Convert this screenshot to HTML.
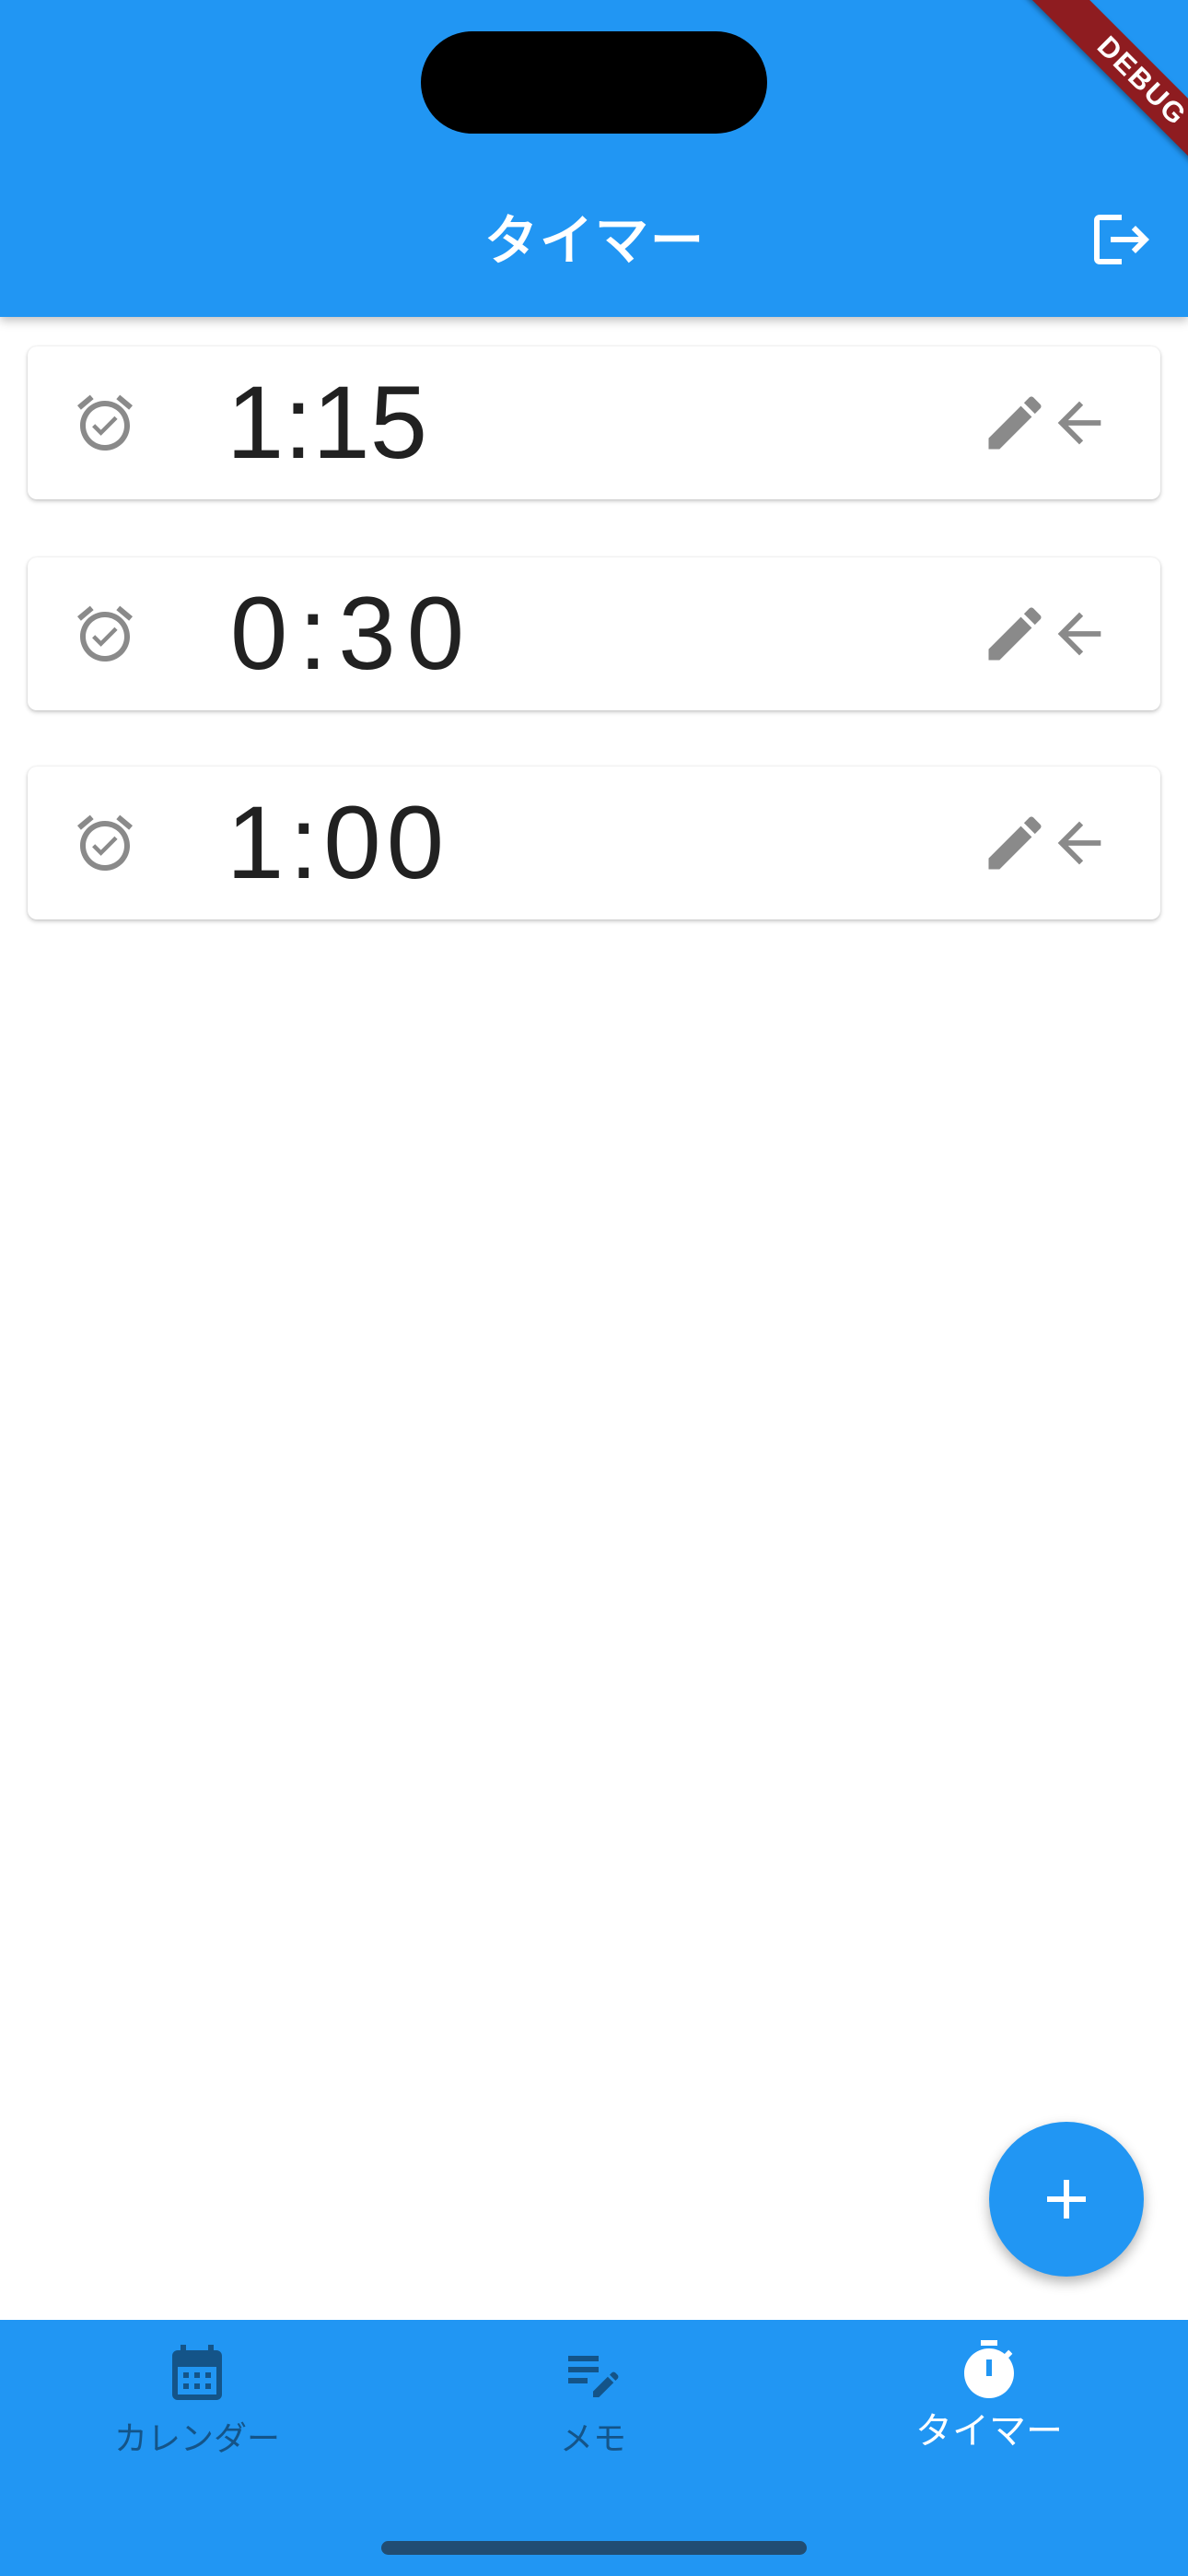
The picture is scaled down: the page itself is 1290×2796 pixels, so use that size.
<!DOCTYPE html>
<html><head><meta charset="utf-8"><style>
body{margin:0;width:1290px;height:2796px;position:relative;background:#fff;overflow:hidden;font-family:"Liberation Sans","Noto Sans CJK JP",sans-serif}
.hdr{position:absolute;left:0;top:0;width:1290px;height:344px;background:#2196F3;box-shadow:0 4px 10px rgba(0,0,0,.25);z-index:2;overflow:hidden}
.island{position:absolute;left:457px;top:34px;width:376px;height:111px;border-radius:56px;background:#000}
.title{position:absolute;left:0;width:1290px;top:224px;text-align:center;color:#fff;font-size:60px;line-height:76px;font-weight:500}
.card{position:absolute;left:30px;width:1230px;height:166px;background:#fff;border-radius:10px;box-shadow:0 2px 5px rgba(0,0,0,.22),0 0 2px rgba(0,0,0,.08)}
.card .t{position:absolute;left:216px;top:20px;font-size:112px;line-height:126px;color:#212121}
.card svg{position:absolute;fill:#8a8a8a}
.fab{position:absolute;left:1074px;top:2303px;width:168px;height:168px;border-radius:50%;background:#2196F3;box-shadow:0 6px 14px rgba(0,0,0,.3)}
.nav{position:absolute;left:0;top:2518px;width:1290px;height:278px;background:#2196F3}
.lab{position:absolute;width:400px;text-align:center;font-size:36px;line-height:44px}
</style></head><body>
<div class="hdr">
<div class="island"></div>
<div class="title">タイマー</div>
<svg style="position:absolute;left:1182px;top:224px" width="72" height="72" viewBox="0 0 24 24" fill="#fff"><path d="M17 7l-1.41 1.41L18.17 11H8v2h10.17l-2.58 2.58L17 17l5-5zM4 5h8V3H4c-1.1 0-2 .9-2 2v14c0 1.1.9 2 2 2h8v-2H4V5z"/></svg>
<div style="position:absolute;left:1070px;top:66px;width:340px;height:44px;background:#8e1c20;transform:rotate(45deg);transform-origin:center;box-shadow:0 3px 6px rgba(0,0,0,.35);color:#fff;font-weight:bold;font-size:31px;line-height:44px;text-align:center;letter-spacing:2px">DEBUG</div>
</div>

<div class="card" style="top:376px">
<svg style="left:48px;top:47px" width="72" height="72" viewBox="0 0 24 24"><path d="M10.54 14.53L8.41 12.4l-1.06 1.06 3.18 3.18 6-6-1.06-1.06zM22 5.72l-4.6-3.86-1.29 1.53 4.6 3.86zM7.88 3.39L6.6 1.86 2 5.71l1.29 1.53zM12 4c-4.97 0-9 4.03-9 9s4.02 9 9 9c4.97 0 9-4.03 9-9s-4.03-9-9-9zm0 16c-3.87 0-7-3.13-7-7s3.13-7 7-7 7 3.130 7 7-3.13 7-7 7z"/></svg>
<div class="t">1:15</div>
<svg style="left:1034px;top:45px" width="76" height="76" viewBox="0 0 24 24"><path d="M3 17.25V21h3.75L17.81 9.94l-3.75-3.75L3 17.25zM20.71 7.04c.39-.39.39-1.02 0-1.41l-2.34-2.34c-.39-.39-1.02-.39-1.41 0l-1.83 1.83 3.75 3.75 1.83-1.83z"/></svg>
<svg style="left:1107px;top:48px" width="70" height="70" viewBox="0 0 24 24"><path d="M20 11H7.83l5.59-5.59L12 4l-8 8 8 8 1.41-1.41L7.83 13H20v-2z"/></svg>
</div>
<div class="card" style="top:605px">
<svg style="left:48px;top:47px" width="72" height="72" viewBox="0 0 24 24"><path d="M10.54 14.53L8.41 12.4l-1.06 1.06 3.18 3.18 6-6-1.06-1.06zM22 5.72l-4.6-3.86-1.29 1.53 4.6 3.86zM7.88 3.39L6.6 1.86 2 5.71l1.29 1.53zM12 4c-4.97 0-9 4.03-9 9s4.02 9 9 9c4.97 0 9-4.03 9-9s-4.03-9-9-9zm0 16c-3.87 0-7-3.13-7-7s3.13-7 7-7 7 3.13 7 7-3.13 7-7 7z"/></svg>
<div class="t" style="left:220px;letter-spacing:12px">0:30</div>
<svg style="left:1034px;top:45px" width="76" height="76" viewBox="0 0 24 24"><path d="M3 17.25V21h3.75L17.81 9.94l-3.75-3.75L3 17.25zM20.71 7.04c.39-.39.39-1.02 0-1.41l-2.34-2.34c-.39-.39-1.02-.39-1.41 0l-1.83 1.83 3.75 3.75 1.83-1.83z"/></svg>
<svg style="left:1107px;top:48px" width="70" height="70" viewBox="0 0 24 24"><path d="M20 11H7.83l5.59-5.59L12 4l-8 8 8 8 1.41-1.41L7.83 13H20v-2z"/></svg>
</div>
<div class="card" style="top:832px">
<svg style="left:48px;top:47px" width="72" height="72" viewBox="0 0 24 24"><path d="M10.54 14.53L8.41 12.4l-1.06 1.06 3.18 3.18 6-6-1.06-1.06zM22 5.72l-4.6-3.86-1.29 1.53 4.6 3.86zM7.88 3.39L6.6 1.86 2 5.71l1.29 1.53zM12 4c-4.97 0-9 4.03-9 9s4.02 9 9 9c4.97 0 9-4.03 9-9s-4.03-9-9-9zm0 16c-3.87 0-7-3.13-7-7s3.13-7 7-7 7 3.13 7 7-3.13 7-7 7z"/></svg>
<div class="t" style="letter-spacing:6px">1:00</div>
<svg style="left:1034px;top:45px" width="76" height="76" viewBox="0 0 24 24"><path d="M3 17.25V21h3.75L17.81 9.94l-3.75-3.75L3 17.25zM20.71 7.04c.39-.39.39-1.02 0-1.41l-2.34-2.34c-.39-.39-1.02-.39-1.41 0l-1.83 1.83 3.75 3.75 1.83-1.83z"/></svg>
<svg style="left:1107px;top:48px" width="70" height="70" viewBox="0 0 24 24"><path d="M20 11H7.83l5.59-5.59L12 4l-8 8 8 8 1.41-1.41L7.83 13H20v-2z"/></svg>
</div>

<div class="fab"><svg style="position:absolute;left:48px;top:48px" width="72" height="72" viewBox="0 0 24 24" fill="#fff"><path d="M19 13h-6v6h-2v-6H5v-2h6V5h2v6h6v2z"/></svg></div>

<div class="nav">
<svg style="position:absolute;left:178px;top:21px" width="72" height="72" viewBox="0 0 24 24" fill="#145488"><path d="M19 4h-1V2h-2v2H8V2H6v2H5c-1.11 0-1.99.9-1.99 2L3 20a2 2 0 002 2h14c1.1 0 2-.9 2-2V6c0-1.1-.9-2-2-2zm0 16H5V10h14v10zM9 14H7v-2h2v2zm4 0h-2v-2h2v2zm4 0h-2v-2h2v2zm-8 4H7v-2h2v2zm4 0h-2v-2h2v2zm4 0h-2v-2h2v2z"/></svg>
<div class="lab" style="left:14px;top:107px;color:#145488">カレンダー</div>
<svg style="position:absolute;left:608px;top:21px" width="72" height="72" viewBox="0 0 24 24" fill="#145488"><path d="M3 10h11v2H3zm0-2h11V6H3zm0 8h7v-2H3zm15.01-3.13l.71-.71c.39-.39 1.02-.39 1.41 0l.71.71c.39.39.39 1.02 0 1.41l-.71.71-2.12-2.12zm-.71.71l-5.3 5.3V21h2.12l5.3-5.3-2.12-2.12z"/></svg>
<div class="lab" style="left:444px;top:107px;color:#145488">メモ</div>
<svg style="position:absolute;left:1038px;top:19px" width="72" height="72" viewBox="0 0 24 24" fill="#fff"><path d="M9 1h6v2H9zm10.03 6.39l1.42-1.42c-.43-.51-.9-.99-1.41-1.41l-1.42 1.42C16.07 4.74 14.12 4 12 4c-4.97 0-9 4.03-9 9s4.02 9 9 9 9-4.03 9-9c0-2.12-.74-4.07-1.970-5.61zM13 14h-2V8h2v6z"/></svg>
<div class="lab" style="left:874px;top:99px;color:#fff;font-size:40px">タイマー</div>
<div style="position:absolute;left:414px;top:240px;width:462px;height:15px;border-radius:8px;background:#214d73"></div>
</div>
</body></html>
